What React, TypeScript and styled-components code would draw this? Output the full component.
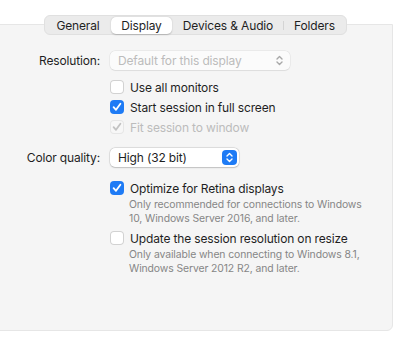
import React from "react";
import styled, { createGlobalStyle, css } from "styled-components";

const GlobalStyle = createGlobalStyle`
  html, body {
    margin: 0;
    padding: 0;
    background: #ffffff;
    overflow: hidden;
  }
  body {
    font-family: Inter, "Noto Sans", "Liberation Sans", sans-serif;
    font-size: 12px;
    letter-spacing: -0.15px;
    color: #1f1f1f;
    -webkit-font-smoothing: antialiased;
  }
`;

const Page = styled.div`
  width: 400px;
  height: 338px;
  padding-top: 15px;
  box-sizing: border-box;
`;

const TabBar = styled.div`
  position: relative;
  z-index: 1;
  display: flex;
  align-items: center;
  margin-left: 44px;
  width: 303px;
  height: 20px;
  box-sizing: border-box;
  background: #ebebeb;
  border: 1px solid #e0e0e0;
  border-radius: 6px;
  padding: 0 1px;
`;

const Tab = styled.div<{ $active?: boolean; $width: number }>`
  width: ${(p) => p.$width}px;
  height: 17px;
  display: flex;
  align-items: center;
  justify-content: center;
  color: #1f1f1f;
  border-radius: 5px;
  ${(p) =>
    p.$active &&
    css`
      background: #ffffff;
      box-shadow: 0 0.5px 1.5px rgba(0, 0, 0, 0.22);
    `}
`;

const TabDivider = styled.div<{ $hidden?: boolean }>`
  width: 1px;
  height: 9px;
  background: ${(p) => (p.$hidden ? "transparent" : "#d4d4d4")};
`;

const Panel = styled.div`
  margin-top: -11px;
  margin-left: -8px;
  width: 401px;
  height: 307px;
  box-sizing: border-box;
  background: #f5f5f5;
  border: 1px solid #e6e6e6;
  border-radius: 0 0 6px 0;
  padding: 26px 0 0 7px;
  display: flex;
  flex-direction: column;
`;

const Row = styled.div<{ $gap?: number }>`
  display: grid;
  grid-template-columns: 100px 1fr;
  column-gap: 10px;
  align-items: center;
  margin-top: ${(p) => p.$gap ?? 0}px;
`;

const Label = styled.div`
  text-align: right;
  white-space: nowrap;
`;

const Popup = styled.div<{ $disabled?: boolean; $width: number }>`
  width: ${(p) => p.$width}px;
  height: 19px;
  box-sizing: border-box;
  display: flex;
  align-items: center;
  justify-content: space-between;
  padding: 0 2px 0 8px;
  background: ${(p) => (p.$disabled ? "#fbfbfb" : "#ffffff")};
  border-radius: 5px;
  box-shadow: ${(p) =>
    p.$disabled
      ? "0 0 0 0.5px rgba(0,0,0,0.08), 0 0.5px 1px rgba(0,0,0,0.06)"
      : "0 0 0 0.5px rgba(0,0,0,0.14), 0 0.5px 1.5px rgba(0,0,0,0.16)"};
  color: ${(p) => (p.$disabled ? "#bcbcbc" : "#1f1f1f")};
`;

const Stepper = styled.div<{ $disabled?: boolean }>`
  width: 15px;
  height: 15px;
  border-radius: 4px;
  display: flex;
  align-items: center;
  justify-content: center;
  background: ${(p) => (p.$disabled ? "transparent" : "#1e7bf5")};
  margin-right: ${(p) => (p.$disabled ? 1 : 0)}px;
`;

const CheckRow = styled.div`
  height: 20px;
  display: flex;
  align-items: center;
  gap: 6px;
`;

const Box = styled.div<{ $checked?: boolean; $disabled?: boolean }>`
  width: 14px;
  height: 14px;
  box-sizing: border-box;
  border-radius: 4px;
  display: flex;
  align-items: center;
  justify-content: center;
  flex-shrink: 0;
  ${(p) =>
    p.$checked && !p.$disabled
      ? css`
          background: #1e7bf5;
        `
      : css`
          background: ${p.$disabled ? "#f7f7f7" : "#ffffff"};
          box-shadow: inset 0 0 0 1px ${p.$disabled ? "#e6e6e6" : "#d2d2d2"};
        `}
`;

const CheckText = styled.span<{ $disabled?: boolean }>`
  color: ${(p) => (p.$disabled ? "#bcbcbc" : "#1f1f1f")};
  white-space: nowrap;
`;

const Description = styled.div`
  padding-left: 19px;
  font-size: 10.4px;
  letter-spacing: -0.1px;
  line-height: 14px;
  color: #868686;
`;

const Chevrons = ({ color }: { color: string }) => (
  <svg width="9" height="11" viewBox="0 0 9 11">
    <path
      d="M2 4 L4.5 1.6 L7 4 M2 7 L4.5 9.4 L7 7"
      fill="none"
      stroke={color}
      strokeWidth="1.4"
      strokeLinecap="round"
      strokeLinejoin="round"
    />
  </svg>
);

const Check = ({ color }: { color: string }) => (
  <svg width="10" height="10" viewBox="0 0 10 10">
    <path
      d="M1.6 5.2 L4 7.8 L8.4 1.8"
      fill="none"
      stroke={color}
      strokeWidth="1.8"
      strokeLinecap="round"
      strokeLinejoin="round"
    />
  </svg>
);

const Checkbox = ({
  checked,
  disabled,
  children,
}: {
  checked?: boolean;
  disabled?: boolean;
  children: React.ReactNode;
}) => (
  <CheckRow>
    <Box $checked={checked} $disabled={disabled}>
      {checked && <Check color={disabled ? "#c2c2c2" : "#ffffff"} />}
    </Box>
    <CheckText $disabled={disabled}>{children}</CheckText>
  </CheckRow>
);

const App = () => {
  return (
    <>
      <GlobalStyle />
      <Page>
        <TabBar>
          <Tab $width={64}>General</Tab>
          <TabDivider $hidden />
          <Tab $active $width={61}>Display</Tab>
          <TabDivider $hidden />
          <Tab $width={110}>Devices &amp; Audio</Tab>
          <TabDivider />
          <Tab $width={61}>Folders</Tab>
        </TabBar>
        <Panel>
          <Row>
            <Label>Resolution:</Label>
            <Popup $disabled $width={180}>
              <span>Default for this display</span>
              <Stepper $disabled>
                <Chevrons color="#a8a8a8" />
              </Stepper>
            </Popup>
          </Row>
          <Row $gap={7}>
            <span />
            <div>
              <Checkbox>Use all monitors</Checkbox>
              <Checkbox checked>Start session in full screen</Checkbox>
              <Checkbox checked disabled>
                Fit session to window
              </Checkbox>
            </div>
          </Row>
          <Row $gap={11}>
            <Label>Color quality:</Label>
            <Popup $width={129}>
              <span>High (32 bit)</span>
              <Stepper>
                <Chevrons color="#ffffff" />
              </Stepper>
            </Popup>
          </Row>
          <Row $gap={11}>
            <span />
            <div>
              <Checkbox checked>Optimize for Retina displays</Checkbox>
              <Description>
                Only recommended for connections to Windows
                <br />
                10, Windows Server 2016, and later.
              </Description>
            </div>
          </Row>
          <Row $gap={2}>
            <span />
            <div>
              <Checkbox>Update the session resolution on resize</Checkbox>
              <Description>
                Only available when connecting to Windows 8.1,
                <br />
                Windows Server 2012 R2, and later.
              </Description>
            </div>
          </Row>
        </Panel>
      </Page>
    </>
  );
};

export default App;
